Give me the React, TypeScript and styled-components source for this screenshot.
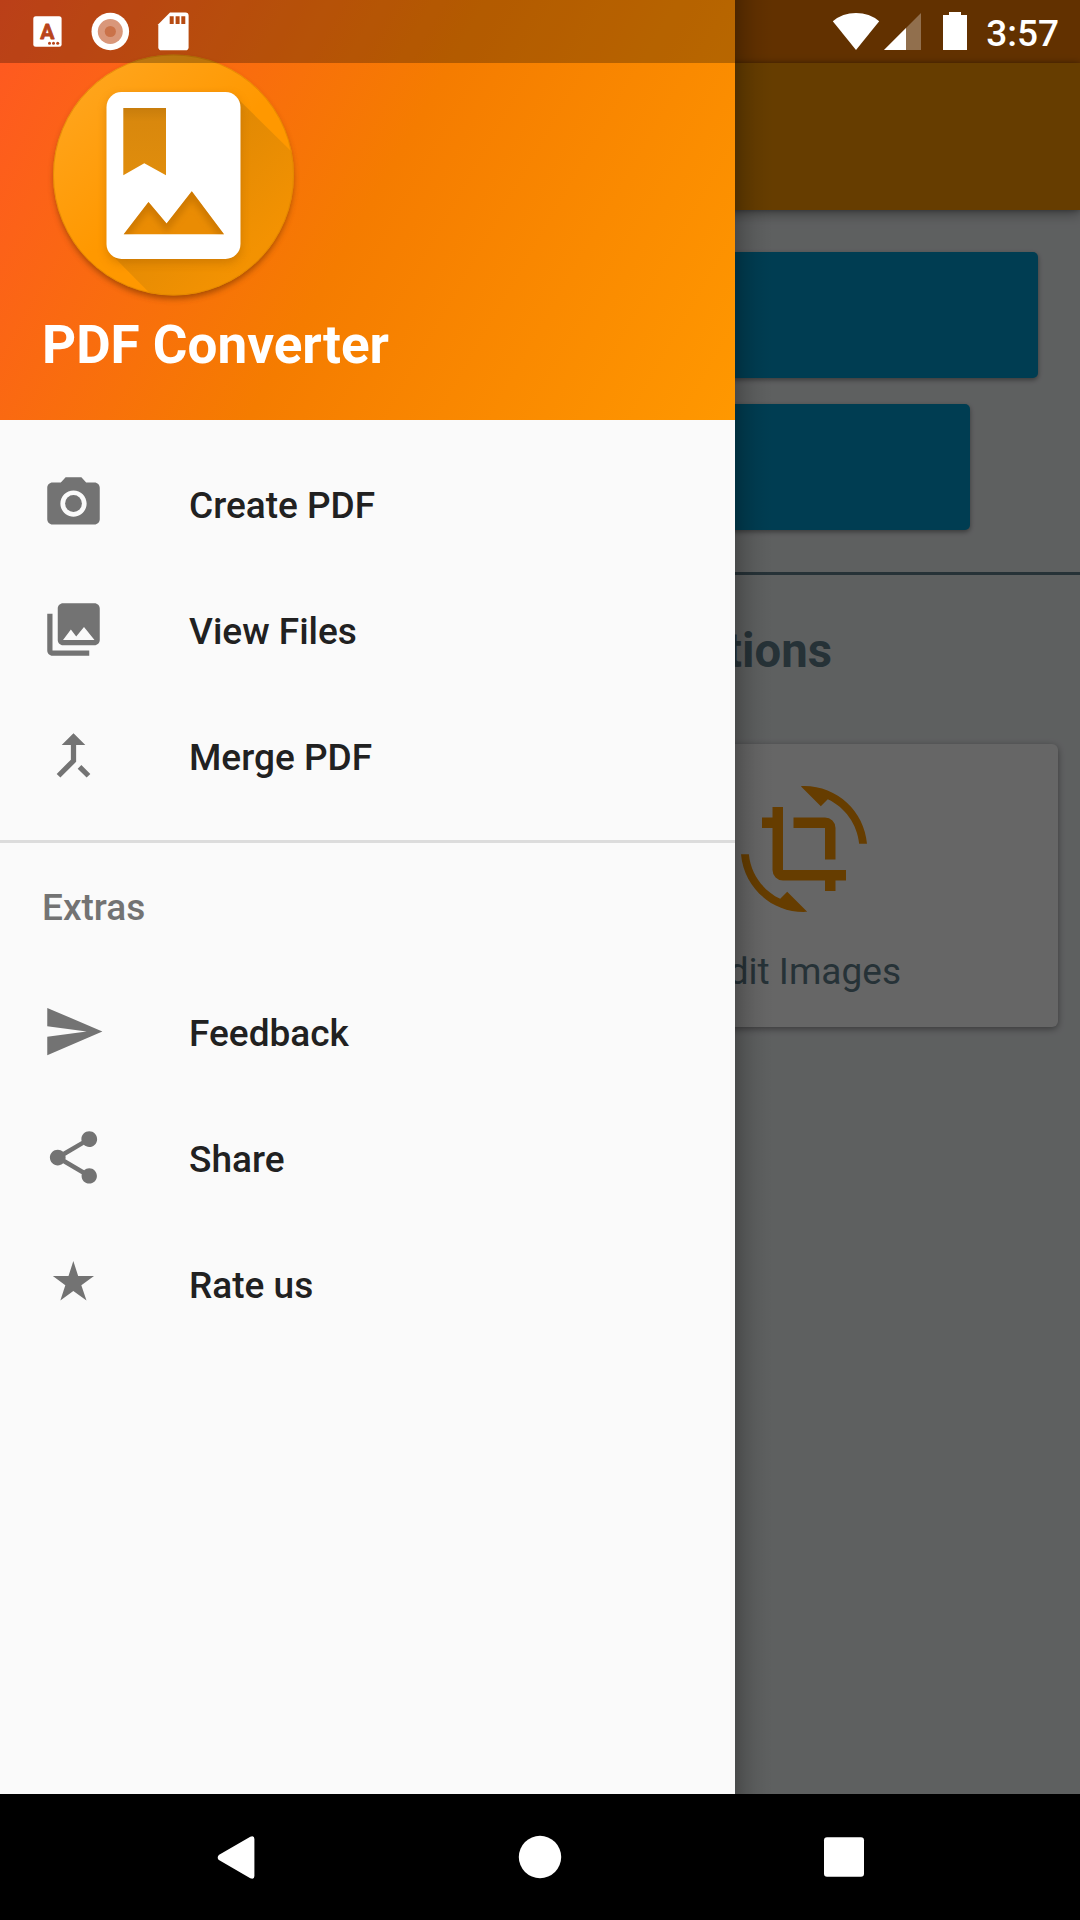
import React from 'react';
import styled, { createGlobalStyle } from 'styled-components';
import type { IconType } from 'react-icons';
import { MdPhotoCamera, MdCollections, MdCallMerge, MdSend, MdShare, MdCropRotate } from 'react-icons/md';

const GlobalStyle = createGlobalStyle`
  *, *::before, *::after { box-sizing: border-box; }
  body { margin: 0; background: #000; }
  svg { display: block; flex: none; }
`;

const Device = styled.div`
  display: flex;
  flex-direction: column;
  width: 1080px;
  height: 1920px;
  overflow: hidden;
  font-family: Roboto, "Liberation Sans", sans-serif;
`;

const Screen = styled.div`
  position: relative;
  height: 1794px;
  overflow: hidden;
`;

/* ---------- Main page under the drawer ---------- */

const Page = styled.main`
  display: flex;
  flex-direction: column;
  height: 100%;
  background: #eceff1;
`;

const StatusBackdrop = styled.div`
  height: 63px;
  background: #f57c00;
`;

const AppBar = styled.header`
  height: 147px;
  background: #ff9800;
  box-shadow: 0 4px 12px rgba(0, 0, 0, 0.35), 0 0 5px rgba(0, 0, 0, 0.3);
`;

const Actions = styled.div`
  display: flex;
  flex-direction: column;
  align-items: center;
  gap: 26px;
  padding: 42px 42px;
`;

const ActionButton = styled.div<{ $width: number }>`
  width: ${(p) => p.$width}px;
  height: 126px;
  border-radius: 5px;
  background: #0099cc;
  box-shadow: 0 2px 5px rgba(0, 0, 0, 0.4);
`;

const PageRule = styled.div`
  height: 3px;
  background: #607d8b;
`;

const SectionTitle = styled.h2`
  margin: 46px 248px 0 0;
  text-align: right;
  font-size: 47.25px;
  line-height: 60px;
  font-weight: 700;
  color: #607d8b;
`;

const CardGrid = styled.div`
  display: grid;
  grid-template-columns: 508px 508px;
  gap: 20px;
  padding: 63px 22px 0;
`;

const Card = styled.div`
  display: flex;
  flex-direction: column;
  align-items: center;
  gap: 37px;
  height: 283px;
  padding-top: 42px;
  border-radius: 6px;
  background: #fff;
  box-shadow: 0 2px 7px rgba(0, 0, 0, 0.4);
  color: #ff9800;
`;

const CardLabel = styled.span`
  font-size: 37px;
  line-height: 46px;
  color: #607d8b;
`;

const Scrim = styled.div`
  position: absolute;
  inset: 0;
  background: rgba(0, 0, 0, 0.6);
`;

/* ---------- Drawer ---------- */

const Drawer = styled.aside`
  position: absolute;
  top: 0;
  left: 0;
  bottom: 0;
  width: 735px;
  background: #fafafa;

  &::after {
    content: "";
    position: absolute;
    top: 0;
    bottom: 0;
    left: 100%;
    width: 40px;
    background: linear-gradient(
      to right,
      rgba(0, 0, 0, 0.23) 0%,
      rgba(0, 0, 0, 0.13) 25%,
      rgba(0, 0, 0, 0.05) 52%,
      rgba(0, 0, 0, 0.01) 80%,
      rgba(0, 0, 0, 0) 100%
    );
  }
`;

const DrawerHeader = styled.div`
  display: flex;
  flex-direction: column;
  height: 420px;
  padding: 49px 0 0 42px;
  background: linear-gradient(119.75deg, #ff5722 0%, #f57c00 50%, #ff9800 100%);
`;

const DrawerTitle = styled.h1`
  margin: 6px 0 0;
  font-size: 53px;
  line-height: 62px;
  font-weight: 700;
  color: #fff;
`;

const Menu = styled.nav`
  display: flex;
  flex-direction: column;
  padding-top: 21px;
`;

const MenuItem = styled.a`
  display: flex;
  align-items: flex-start;
  gap: 84px;
  height: 126px;
  padding: 31px 42px 0;
  color: #737373;
`;

const MenuLabel = styled.span`
  font-size: 37px;
  line-height: 68px;
  font-weight: 500;
  color: #212121;
`;

const MenuRule = styled.div`
  height: 3px;
  margin-top: 21px;
  background: #dcdcdc;
`;

const MenuHeading = styled.div`
  height: 126px;
  padding: 31px 42px 0;
  font-size: 37px;
  line-height: 68px;
  font-weight: 500;
  color: #737373;
`;

/* ---------- System bars ---------- */

const StatusBar = styled.div`
  position: absolute;
  top: 0;
  left: 0;
  right: 0;
  display: flex;
  justify-content: space-between;
  height: 63px;
`;

const StatusLeft = styled.div`
  width: 735px;
  background: rgba(0, 0, 0, 0.267);
`;

const StatusRight = styled.div`
  display: flex;
  flex: 1;
  justify-content: flex-end;
  padding-right: 21px;
`;

const Clock = styled.span`
  margin-left: 18px;
  font-size: 37px;
  line-height: 67px;
  font-weight: 500;
  color: #fff;
`;

const NavBar = styled.footer`
  display: flex;
  justify-content: space-between;
  align-items: center;
  height: 126px;
  padding: 0 204px;
  background: #000;
`;

/* ---------- Drawings ---------- */

const Logo = () => (
  <svg width="263" height="259" viewBox="42 49 263 259">
    <defs>
      <linearGradient id="disc" x1="0.1" y1="0.1" x2="0.8" y2="0.9">
        <stop offset="0" stopColor="#ffa51d" />
        <stop offset="0.55" stopColor="#ff9800" />
        <stop offset="1" stopColor="#ff9800" />
      </linearGradient>
      <linearGradient id="cast" x1="150" y1="130" x2="262" y2="245" gradientUnits="userSpaceOnUse">
        <stop offset="0" stopColor="#c47a08" stopOpacity="0.65" />
        <stop offset="1" stopColor="#c47a08" stopOpacity="0.2" />
      </linearGradient>
      <linearGradient id="ribbon" x1="0" y1="0" x2="0" y2="1">
        <stop offset="0" stopColor="#c87d0c" />
        <stop offset="0.2" stopColor="#d9880d" />
        <stop offset="1" stopColor="#e08d0c" />
      </linearGradient>
      <clipPath id="discClip">
        <circle cx="173.5" cy="175" r="120" />
      </clipPath>
      <clipPath id="peaksClip">
        <path d="M123.7 234.3L148.5 202L166.6 223.5L191.8 191.3L224 234.3z" />
      </clipPath>
      <filter id="soft" x="-20%" y="-20%" width="140%" height="140%">
        <feGaussianBlur stdDeviation="3.2" />
      </filter>
      <filter id="softer" x="-20%" y="-20%" width="140%" height="140%">
        <feGaussianBlur stdDeviation="5" />
      </filter>
    </defs>
    <circle cx="173.5" cy="179" r="119.5" fill="#803800" opacity="0.7" filter="url(#soft)" />
    <circle cx="173.5" cy="175" r="120.5" fill="url(#disc)" />
    <g clipPath="url(#discClip)">
      <path d="M236 97L340 199V340H196L111 254z" fill="url(#cast)" />
      <rect x="107" y="96" width="134" height="167" rx="15" fill="#b86a00" opacity="0.55" filter="url(#softer)" />
    </g>
    <circle cx="173.5" cy="175" r="120" fill="none" stroke="#d98200" strokeOpacity="0.6" strokeWidth="1" />
    <rect x="106.5" y="92" width="134" height="167" rx="15" fill="#fff" />
    <path d="M123.3 108H166V175.3L144.3 163.2L123.3 175.3z" fill="url(#ribbon)" />
    <path d="M123.7 234.3L148.5 202L166.6 223.5L191.8 191.3L224 234.3z" fill="#ea8c03" />
    <g clipPath="url(#peaksClip)">
      <path d="M121 237L148.5 202L166.6 223.5L191.8 191.3L227 238" fill="none" stroke="#b86a00" strokeOpacity="0.55" strokeWidth="11" filter="url(#soft)" />
    </g>
  </svg>
);

const StarIcon = () => (
  <svg width="63" height="63" viewBox="0 0 189 189" fill="currentColor">
    <path d="M94 27L108.500 72H156L118 100L133.500 145.500L94 117L55 145.500L70 100L32.500 72H79.500z" />
  </svg>
);

const Notifications = () => (
  <svg width="220" height="63" viewBox="0 0 220 63">
    <rect x="33.3" y="16.200" width="28.300" height="30.500" rx="2.500" fill="#fff" />
    <text x="47.200" y="38.500" textAnchor="middle" fontFamily="Roboto, sans-serif" fontWeight="700" fontSize="21" fill="#b9441a" stroke="#b9441a" strokeWidth="0.8" strokeLinejoin="round">
      A
    </text>
    <g fill="#b9451a">
      <circle cx="49.500" cy="43.200" r="1.500" />
      <circle cx="53.500" cy="43.200" r="1.500" />
      <circle cx="57.700" cy="43.200" r="1.500" />
    </g>
    <circle cx="110.300" cy="31.500" r="18.800" fill="#fff" />
    <circle cx="110.300" cy="31.500" r="12.500" fill="#d9977a" />
    <circle cx="110.300" cy="31.500" r="5.600" fill="#ca7249" />
    <path d="M170 12.500H185.500Q188.600 12.500 188.600 15.600V47.200Q188.600 50.300 185.500 50.300H161.500Q158.300 50.300 158.300 47.200V24.300z" fill="#fff" />
    <path d="M169.700 16.300h4v7.600h-4zM175.600 16.300h4v7.600h-4zM181.300 16.300h4v7.600h-4z" fill="#b74b12" />
  </svg>
);

const SystemIcons = () => (
  <svg width="136" height="63" viewBox="832 0 136 63" fill="#fff">
    <path d="M856 50L832.800 21.200Q842.500 13 856 13T879.200 21.200z" />
    <path d="M921 13V50H884z" fillOpacity="0.3" />
    <path d="M906 28V50H884z" />
    <path d="M949 12h12v3h6v35h-24V15h6z" />
  </svg>
);

const BackIcon = () => (
  <svg width="63" height="63" viewBox="0 0 63 63" fill="#fff">
    <path d="M14.300 29.300L46.300 10.800Q50.400 9.300 50.400 13V50Q50.400 53.700 46.300 52.200L14.900 34.100Q12.500 31.500 14.900 28.900z" />
  </svg>
);

const HomeIcon = () => (
  <svg width="63" height="63" viewBox="0.500 0.500 63 63" fill="#fff">
    <circle cx="31.500" cy="31.500" r="21.200" />
  </svg>
);

const RecentsIcon = () => (
  <svg width="63" height="63" viewBox="0.500 0.500 63 63" fill="#fff">
    <rect x="11.500" y="11.700" width="40" height="39.600" rx="3" />
  </svg>
);

const mainItems: { label: string; icon: IconType }[] = [
  { label: 'Create PDF', icon: MdPhotoCamera },
  { label: 'View Files', icon: MdCollections },
  { label: 'Merge PDF', icon: MdCallMerge },
];

const extraItems: { label: string; icon: IconType }[] = [
  { label: 'Feedback', icon: MdSend },
  { label: 'Share', icon: MdShare },
  { label: 'Rate us', icon: StarIcon },
];

const renderItem = ({ label, icon: Icon }: { label: string; icon: IconType }) => (
  <MenuItem key={label}>
    <Icon size={63} />
    <MenuLabel>{label}</MenuLabel>
  </MenuItem>
);

export default function App() {
  return (
    <>
      <GlobalStyle />
      <Device>
        <Screen>
          <Page>
            <StatusBackdrop />
            <AppBar />
            <Actions>
              <ActionButton $width={996} />
              <ActionButton $width={860} />
            </Actions>
            <PageRule />
            <SectionTitle>Options</SectionTitle>
            <CardGrid>
              <Card />
              <Card>
                <MdCropRotate size={126} />
                <CardLabel>Edit Images</CardLabel>
              </Card>
            </CardGrid>
          </Page>
          <Scrim />
          <Drawer>
            <DrawerHeader>
              <Logo />
              <DrawerTitle>PDF Converter</DrawerTitle>
            </DrawerHeader>
            <Menu>
              {mainItems.map(renderItem)}
              <MenuRule />
              <MenuHeading>Extras</MenuHeading>
              {extraItems.map(renderItem)}
            </Menu>
          </Drawer>
          <StatusBar>
            <StatusLeft>
              <Notifications />
            </StatusLeft>
            <StatusRight>
              <SystemIcons />
              <Clock>3:57</Clock>
            </StatusRight>
          </StatusBar>
        </Screen>
        <NavBar>
          <BackIcon />
          <HomeIcon />
          <RecentsIcon />
        </NavBar>
      </Device>
    </>
  );
}
